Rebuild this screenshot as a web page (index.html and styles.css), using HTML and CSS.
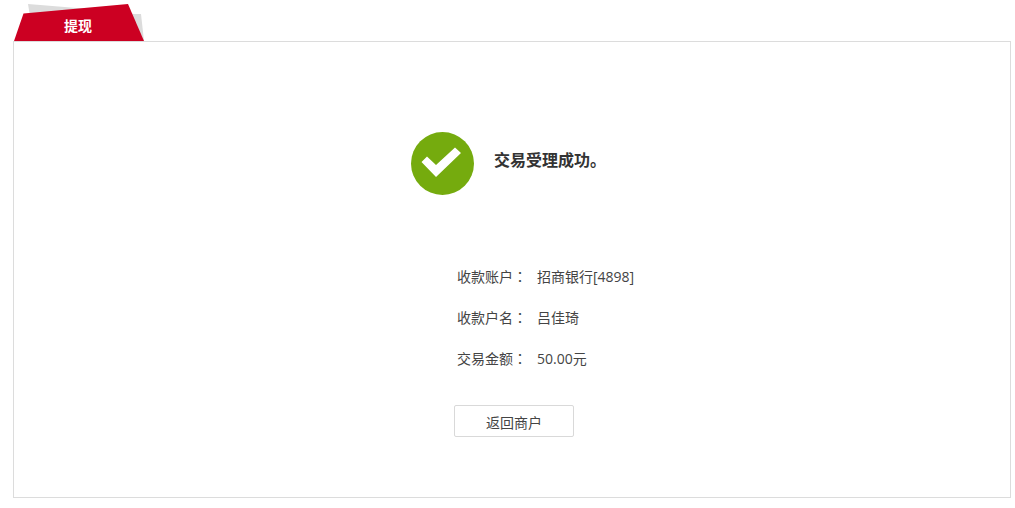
FILE: index.html
```html
<!DOCTYPE html>
<html lang="zh-CN">
<head>
<meta charset="utf-8">
<title>提现</title>
<link rel="stylesheet" href="styles.css">
</head>
<body>
<div class="page">
  <div class="tab">
    <svg class="tab-bg" width="131" height="38" viewBox="0 0 131 38" aria-hidden="true">
      <polygon points="14,0 75,5 120,10 127,10 130,37 20,37" fill="#dcdcdc"/>
      <polygon points="0,37 9.500,9.500 114,0 130,37" fill="#cc0022"/>
    </svg>
    <span class="tab-label">提现</span>
  </div>
  <main class="panel">
    <div class="result">
      <svg class="result-icon" width="63" height="63" viewBox="0 0 63 63" aria-hidden="true">
        <circle cx="31.500" cy="31.500" r="31.500" fill="#75ab0e"/>
        <polygon points="10.500,30 16,24.500 25,33 44,15.500 50,21 25,45" fill="#fff"/>
      </svg>
      <h1 class="result-text">交易受理成功。</h1>
    </div>
    <dl class="details">
      <div class="row"><dt>收款账户<span class="colon" lang="zh-TW">：</span></dt><dd>招商银行[4898]</dd></div>
      <div class="row"><dt>收款户名<span class="colon" lang="zh-TW">：</span></dt><dd>吕佳琦</dd></div>
      <div class="row"><dt>交易金额<span class="colon" lang="zh-TW">：</span></dt><dd>50.00元</dd></div>
    </dl>
    <button class="back" type="button">返回商户</button>
  </main>
</div>
</body>
</html>
```
FILE: styles.css
```css
* { box-sizing: border-box; }
html, body { margin: 0; background: #fff; }
body {
  font-family: "Open Sans", "Noto Sans CJK SC", "Liberation Sans", sans-serif;
  color: #444;
  font-size: 14px;
}
.page { padding: 4px 4px 10px 13px; }
.tab {
  position: relative;
  width: 131px;
  height: 37px;
  margin-left: 1px;
  display: flex;
  align-items: center;
  justify-content: center;
  padding-top: 7px;
  padding-right: 3px;
}
.tab-bg { position: absolute; left: 0; top: 0; }
.tab-label {
  position: relative;
  color: #fff;
  font-weight: 700;
  font-size: 14px;
  line-height: 20px;
}
.panel {
  height: 457px;
  border: 1px solid #dcdcdc;
  padding-top: 90px;
}
.result {
  display: flex;
  align-items: center;
  gap: 20px;
  margin-left: 397px;
}
.result-icon { display: block; flex: none; }
.result-text {
  margin: -8px 0 0;
  font-size: 16px;
  font-weight: 700;
  line-height: 24px;
  color: #333;
}
.details { margin: 61px 0 0 443px; }
.row {
  display: flex;
  height: 41px;
  line-height: 41px;
}
.row dt { width: 80px; }
.row dd { margin: 0; }
.colon { font-family: "Noto Sans CJK TC", sans-serif; }
.back {
  display: block;
  width: 120px;
  height: 32px;
  margin: 26px 0 0 440px;
  padding: 2px 0 0;
  background: #fff;
  border: 1px solid #d9d9d9;
  border-radius: 2px;
  font: inherit;
  color: #444;
}
```
